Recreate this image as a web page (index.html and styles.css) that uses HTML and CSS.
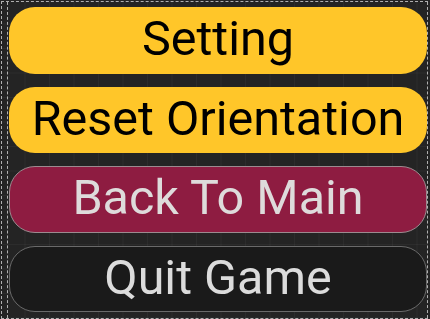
FILE: index.html
```html
<!DOCTYPE html>
<html>
<head>
<meta charset="utf-8">
<link rel="stylesheet" href="styles.css">
</head>
<body>
<div class="frame">
  <div class="menu">
    <div class="btn btn-yellow">Setting</div>
    <div class="btn btn-yellow">Reset Orientation</div>
    <div class="btn btn-red">Back To Main</div>
    <div class="btn btn-dark">Quit Game</div>
  </div>
</div>
</body>
</html>
```
FILE: styles.css
```css
html, body {
  margin: 0;
  padding: 0;
  width: 430px;
  height: 319px;
  overflow: hidden;
  background: #242424;
}
.frame {
  box-sizing: border-box;
  border: 1px dashed #b0b0b0;
  border-right: none;
  margin-left: 1px;
  margin-top: 1px;
  width: 427px;
  height: 318px;
  background-color: #242424;
  background-image:
    linear-gradient(to right, rgba(255,255,255,0.035) 1px, transparent 1px),
    linear-gradient(to bottom, rgba(255,255,255,0.035) 1px, transparent 1px);
  background-size: 24.5px 24.5px;
  background-position: -2px -3px;
}
.menu {
  box-sizing: border-box;
  height: 100%;
  border-left: 1px dashed #b0b0b0;
  border-right: 1px dashed #b0b0b0;
  margin-left: 5px;
  padding: 5px 0 5px 1px;
  display: flex;
  flex-direction: column;
  gap: 13px;
}
.btn {
  box-sizing: border-box;
  height: 66.5px;
  border-radius: 26px;
  display: flex;
  align-items: center;
  justify-content: center;
  font-family: Roboto, "Liberation Sans", sans-serif;
  font-size: 48.5px;
  line-height: 1;
  padding-bottom: 2px;
}
.btn-yellow {
  background: #ffc629;
  color: #000;
}
.btn-red {
  background: #8e1c41;
  color: #dedbdb;
  border: 1px solid #9c8a8f;
}
.btn-dark {
  background: #1a1a1a;
  color: #dcdcdc;
  border: 1px solid #6a6a6a;
}
```
